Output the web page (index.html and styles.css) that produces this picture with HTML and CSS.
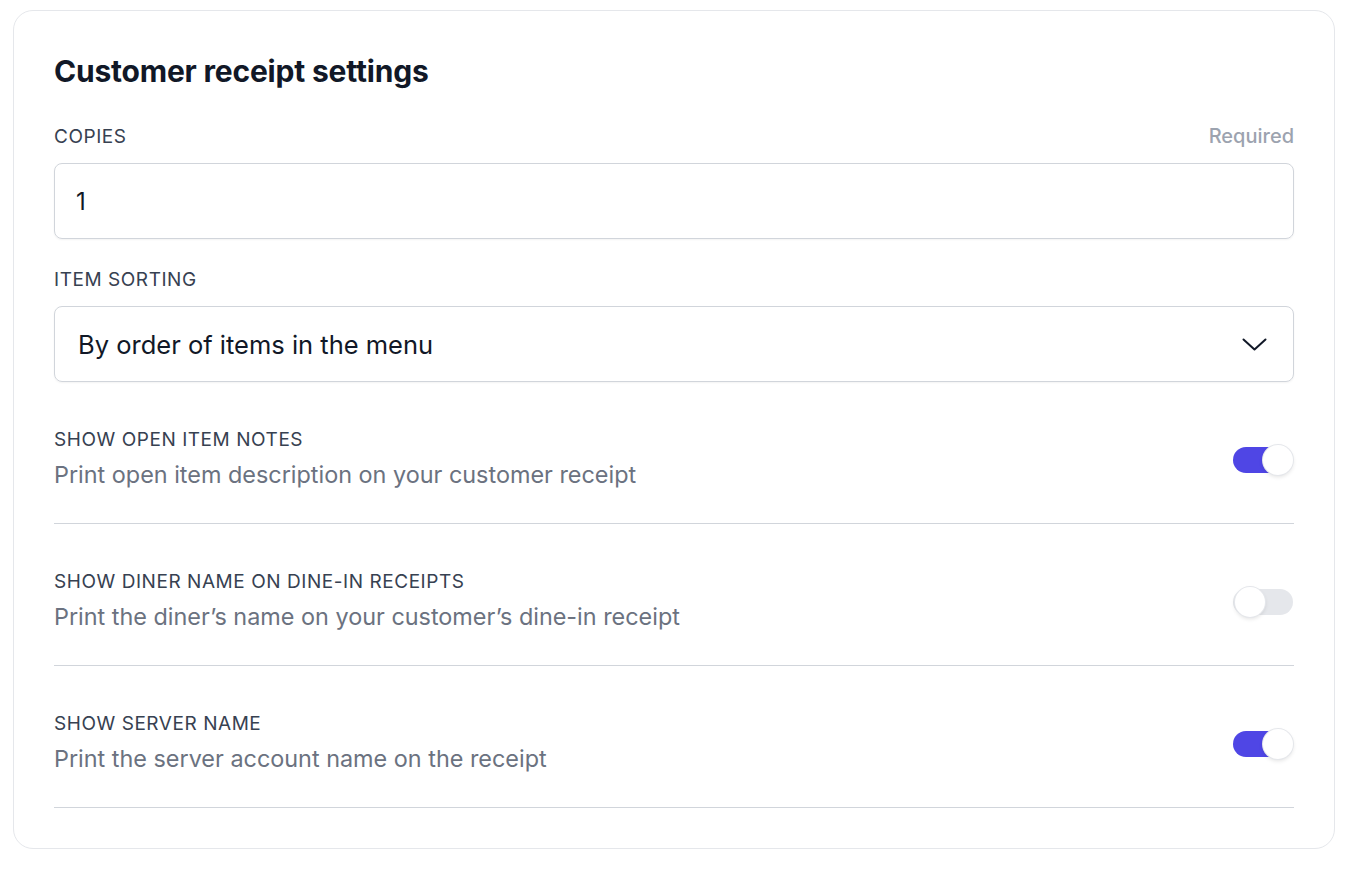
FILE: index.html
```html
<!DOCTYPE html>
<html lang="en">
<head>
  <meta charset="UTF-8">
  <title>Customer receipt settings</title>
  <link rel="stylesheet" href="styles.css">
</head>
<body>
  <section class="card">
    <h2 class="card-title">Customer receipt settings</h2>

    <div class="fields">
      <div class="field">
        <div class="field-head">
          <label class="field-label" for="copies">Copies</label>
          <span class="field-hint">Required</span>
        </div>
        <div class="control">
          <input id="copies" class="control-input" type="text" value="1">
        </div>
      </div>

      <div class="field">
        <div class="field-head">
          <label class="field-label">Item sorting</label>
        </div>
        <div class="control control-select">
          <span class="control-value">By order of items in the menu</span>
          <svg class="chevron" width="25" height="13" viewBox="0 0 25 13" fill="none">
            <path d="M1.5 1.5l11 10 11-10" stroke="#111827" stroke-width="2" stroke-linecap="round" stroke-linejoin="round"/>
          </svg>
        </div>
      </div>
    </div>

    <div class="toggle-row">
      <div class="toggle-text">
        <div class="toggle-label">Show open item notes</div>
        <div class="toggle-desc">Print open item description on your customer receipt</div>
      </div>
      <span class="switch on"><span class="knob"></span></span>
    </div>

    <div class="toggle-row">
      <div class="toggle-text">
        <div class="toggle-label">Show diner name on dine-in receipts</div>
        <div class="toggle-desc">Print the diner’s name on your customer’s dine-in receipt</div>
      </div>
      <span class="switch"><span class="knob"></span></span>
    </div>

    <div class="toggle-row">
      <div class="toggle-text">
        <div class="toggle-label">Show server name</div>
        <div class="toggle-desc">Print the server account name on the receipt</div>
      </div>
      <span class="switch on"><span class="knob"></span></span>
    </div>
  </section>
</body>
</html>
```

FILE: styles.css
```css
body {
  margin: 0;
  padding: 10px 13px;
  background: #fff;
  font-family: Inter, "Noto Sans", sans-serif;
  color: #111827;
}
.card {
  border: 1px solid #e5e7eb;
  border-radius: 20px;
  padding: 40px;
  background: #fff;
}
.card-title {
  margin: 0 0 33px;
  font-size: 30px;
  line-height: 40px;
  font-weight: 700;
  color: #111827;
  letter-spacing: -0.2px;
}
.fields {
  display: flex;
  flex-direction: column;
  gap: 28px;
}
.field-head {
  display: flex;
  justify-content: space-between;
  align-items: center;
  height: 24px;
  margin-bottom: 15px;
}
.field-label {
  font-size: 19px;
  text-transform: uppercase;
  color: #374151;
  letter-spacing: 0.55px;
}
.field-hint {
  font-size: 20px;
  font-weight: 500;
  color: #9ca3af;
}
.control {
  display: flex;
  align-items: center;
  height: 74px;
  border: 1px solid #d1d5db;
  border-radius: 8px;
  box-shadow: 0 1px 2px rgba(0,0,0,.05);
}
.control-input {
  flex: 1;
  border: 0;
  outline: 0;
  background: transparent;
  padding: 0 21px;
  font-family: inherit;
  font-size: 24px;
  color: #111827;
}
.control-select {
  padding: 0 26px 0 23px;
  justify-content: space-between;
}
.control-value {
  font-size: 25.5px;
  color: #111827;
}
.toggle-row {
  display: flex;
  align-items: center;
  justify-content: space-between;
  padding: 46px 0 32px;
  border-bottom: 1px solid #d1d5db;
}
.toggle-label {
  font-size: 19px;
  line-height: 24px;
  text-transform: uppercase;
  color: #374151;
  letter-spacing: 0.55px;
}
.toggle-desc {
  margin-top: 7px;
  font-size: 23.4px;
  line-height: 32px;
  color: #6b7280;
}
.switch {
  display: flex;
  align-items: center;
  width: 60px;
  height: 26px;
  border-radius: 13px;
  background: #e5e7eb;
  margin-right: 1px;
}
.switch.on {
  background: #4f46e5;
  justify-content: flex-end;
}
.knob {
  width: 30px;
  height: 30px;
  border-radius: 50%;
  background: #fff;
  box-shadow: 0 0 0 1px #e5e7eb, 0 2px 4px rgba(0,0,0,.12);
}
.switch:not(.on) .knob {
  margin-left: 2px;
}
```
